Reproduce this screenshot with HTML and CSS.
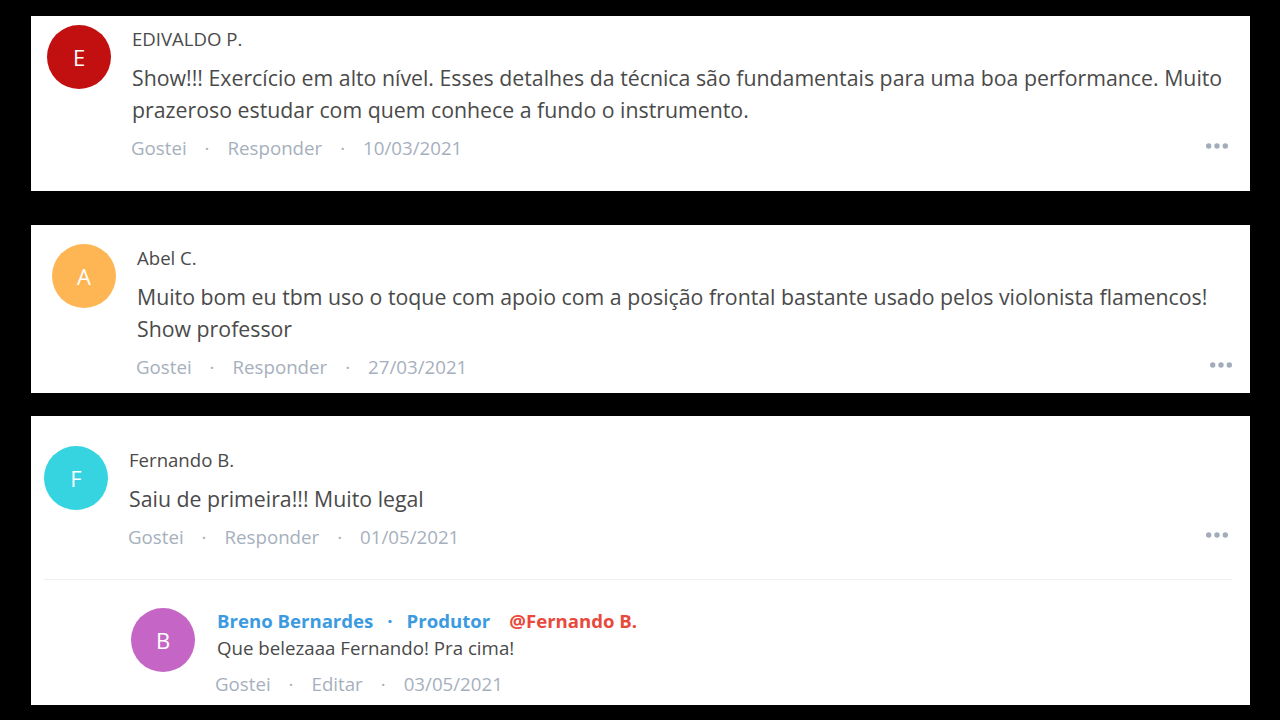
FILE: index.html
```html
<!DOCTYPE html>
<html lang="pt-BR">
<head>
<meta charset="utf-8">
<title>Comentários</title>
<link rel="stylesheet" href="styles.css">
</head>
<body>
<main class="list">
  <article class="card card--one">
    <div class="comment">
      <div class="avatar avatar--red">E</div>
      <div class="comment-body">
        <div class="author">EDIVALDO P.</div>
        <p class="text">Show!!! Exercício em alto nível. Esses detalhes da técnica são fundamentais para uma boa performance. Muito prazeroso estudar com quem conhece a fundo o instrumento.</p>
        <div class="actions actions--wide">
          <span class="action">Gostei</span><span class="sep">·</span><span class="action">Responder</span><span class="sep">·</span><span class="date">10/03/2021</span>
          <svg class="more" width="22" height="6" viewBox="0 0 22 6"><circle cx="2.7" cy="3" r="2.7"/><circle cx="11" cy="3" r="2.7"/><circle cx="19.3" cy="3" r="2.7"/></svg>
        </div>
      </div>
    </div>
  </article>

  <article class="card card--two">
    <div class="comment">
      <div class="avatar avatar--orange">A</div>
      <div class="comment-body">
        <div class="author">Abel C.</div>
        <p class="text">Muito bom eu tbm uso o toque com apoio com a posição frontal bastante usado pelos violonista flamencos! Show professor</p>
        <div class="actions">
          <span class="action">Gostei</span><span class="sep">·</span><span class="action">Responder</span><span class="sep">·</span><span class="date">27/03/2021</span>
          <svg class="more" width="22" height="6" viewBox="0 0 22 6"><circle cx="2.7" cy="3" r="2.7"/><circle cx="11" cy="3" r="2.7"/><circle cx="19.3" cy="3" r="2.7"/></svg>
        </div>
      </div>
    </div>
  </article>

  <article class="card card--three">
    <div class="comment">
      <div class="avatar avatar--cyan">F</div>
      <div class="comment-body">
        <div class="author">Fernando B.</div>
        <p class="text">Saiu de primeira!!! Muito legal</p>
        <div class="actions actions--inset">
          <span class="action">Gostei</span><span class="sep">·</span><span class="action">Responder</span><span class="sep">·</span><span class="date">01/05/2021</span>
          <svg class="more" width="22" height="6" viewBox="0 0 22 6"><circle cx="2.7" cy="3" r="2.7"/><circle cx="11" cy="3" r="2.7"/><circle cx="19.3" cy="3" r="2.7"/></svg>
        </div>
      </div>
    </div>
    <hr class="divider">
    <div class="reply">
      <div class="avatar avatar--purple">B</div>
      <div class="reply-body">
        <div class="reply-author">
          <span class="producer">Breno Bernardes</span><span class="producer-sep">·</span><span class="producer">Produtor</span><span class="mention">@Fernando B.</span>
        </div>
        <p class="reply-text">Que belezaaa Fernando! Pra cima!</p>
        <div class="actions actions--reply">
          <span class="action">Gostei</span><span class="sep">·</span><span class="action">Editar</span><span class="sep">·</span><span class="date">03/05/2021</span>
        </div>
      </div>
    </div>
  </article>
</main>
</body>
</html>
```

FILE: styles.css
```css
* {
  box-sizing: border-box;
}

html, body {
  margin: 0;
  padding: 0;
  background: #000;
}

body {
  font-family: "Open Sans", "Noto Sans", sans-serif;
  color: #4a4a4a;
}

.list {
  width: 1219px;
  margin-left: 31px;
  padding-top: 16px;
  display: flex;
  flex-direction: column;
}

.card {
  background: #fff;
}

.card--one {
  padding: 9px 12px 31px 16px;
}

.card--two {
  margin-top: 34px;
  padding: 19px 18px 14px 21px;
}

.card--three {
  margin-top: 23px;
  padding: 30px 18px 9px 13px;
}

.comment {
  display: flex;
  gap: 21px;
}

.avatar {
  flex: 0 0 64px;
  width: 64px;
  height: 64px;
  border-radius: 50%;
  display: flex;
  align-items: center;
  justify-content: center;
  color: #fff;
  font-size: 22px;
  line-height: 1;
}

.avatar--red { background: #c20f0f; }
.avatar--orange { background: #fdb653; }
.avatar--cyan { background: #35d4e0; }
.avatar--purple { background: #c566c6; }

.comment-body {
  flex: 1;
  padding-top: 2px;
  min-width: 0;
}

.author {
  font-size: 18.6px;
  line-height: 24px;
  color: #4a4a4a;
}

.text {
  margin: 11px 0 0;
  font-size: 21.3px;
  line-height: 32px;
  color: #4a4a4a;
}

.actions {
  margin-top: 10px;
  margin-left: -1px;
  display: flex;
  align-items: flex-start;
  font-size: 18.7px;
  line-height: 24px;
  color: #a6b0bd;
}

.actions--wide {
  padding-right: 10px;
}

.actions--inset {
  padding-right: 4px;
}

.actions--reply {
  margin-left: -2px;
}

.sep {
  margin: 0 18px;
}

.more {
  margin-left: auto;
  margin-top: 7px;
  fill: #a2acba;
}

.divider {
  margin: 30px 0 0;
  border: 0;
  height: 1px;
  background: #efefef;
}

.reply {
  display: flex;
  gap: 22px;
  margin-left: 87px;
  margin-top: 28px;
}

.reply-body {
  flex: 1;
}

.reply-author {
  font-size: 18.6px;
  line-height: 24px;
  font-weight: 700;
  display: flex;
  padding-top: 1px;
}

.producer {
  color: #3c9be0;
}

.producer-sep {
  color: #3c9be0;
  margin: 0 14px;
}

.mention {
  color: #e8493c;
  margin-left: 19px;
}

.reply-text {
  margin: 1px 0 0;
  font-size: 18.7px;
  line-height: 28px;
  color: #4a4a4a;
}
```
